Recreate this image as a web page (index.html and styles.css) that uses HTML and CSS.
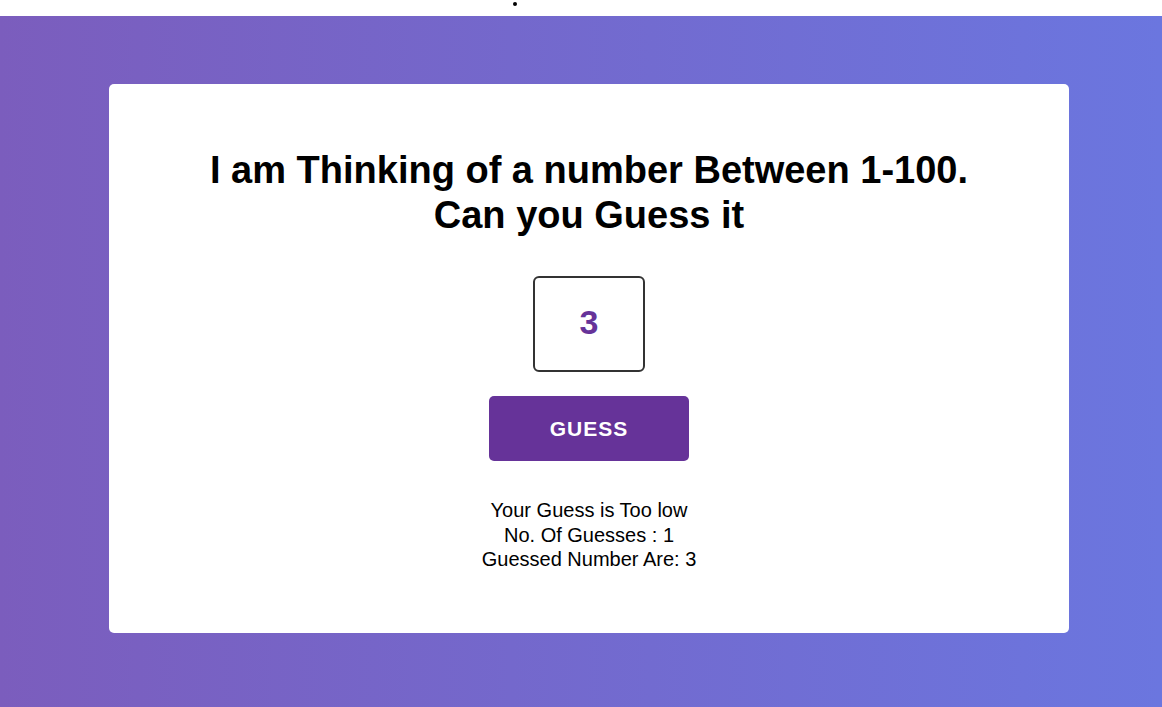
FILE: index.html
```html
<!DOCTYPE html>
<html>
<head>
<meta charset="utf-8">
<link rel="stylesheet" href="styles.css">
</head>
<body>
<div class="topbar"><span class="dot"></span></div>
<main class="stage">
  <section class="card">
    <h1 class="title">I am Thinking of a number Between 1-100.<br>Can you Guess it</h1>
    <input class="guess-input" type="text" value="3">
    <button class="guess-btn">GUESS</button>
    <div class="status">
      <p>Your Guess is Too low</p>
      <p>No. Of Guesses : 1</p>
      <p>Guessed Number Are: 3</p>
    </div>
  </section>
</main>
</body>
</html>
```

FILE: styles.css
```css
* { box-sizing: border-box; }
html, body { margin: 0; padding: 0; }
body {
  font-family: "Liberation Sans", Arial, sans-serif;
  background: #fff;
  width: 1162px;
  height: 707px;
  overflow: hidden;
}
.topbar {
  height: 16px;
  background: #fff;
  display: flex;
  align-items: flex-start;
  padding-left: 513px;
  padding-top: 2px;
}
.dot {
  width: 4px;
  height: 4px;
  border-radius: 50%;
  background: #000;
}
.stage {
  height: 691px;
  background: linear-gradient(to right, #7b5dbd, #6b76df);
  padding-top: 68px;
  padding-left: 16px;
  display: flex;
  justify-content: center;
  align-items: flex-start;
}
.card {
  width: 960px;
  height: 549px;
  background: #fff;
  border-radius: 5px;
  display: flex;
  flex-direction: column;
  align-items: center;
  padding-top: 64px;
}
.title {
  margin: 0;
  font-size: 38px;
  line-height: 45px;
  font-weight: bold;
  text-align: center;
  color: #000;
}
.guess-input {
  margin-top: 38px;
  width: 112px;
  height: 96px;
  border: 2px solid #333;
  border-radius: 6px;
  text-align: center;
  font-family: "Liberation Sans", Arial, sans-serif;
  font-size: 34px;
  font-weight: bold;
  color: #663399;
  outline: none;
  padding: 0 0 4px 0;
}
.guess-btn {
  margin-top: 24px;
  width: 200px;
  height: 65px;
  border: none;
  border-radius: 5px;
  background: #663399;
  color: #fff;
  font-family: "Liberation Sans", Arial, sans-serif;
  font-size: 21px;
  font-weight: bold;
  letter-spacing: 1px;
}
.status {
  margin-top: 37px;
  text-align: center;
  font-size: 20px;
  line-height: 24.5px;
  color: #000;
}
.status p { margin: 0; }
```
